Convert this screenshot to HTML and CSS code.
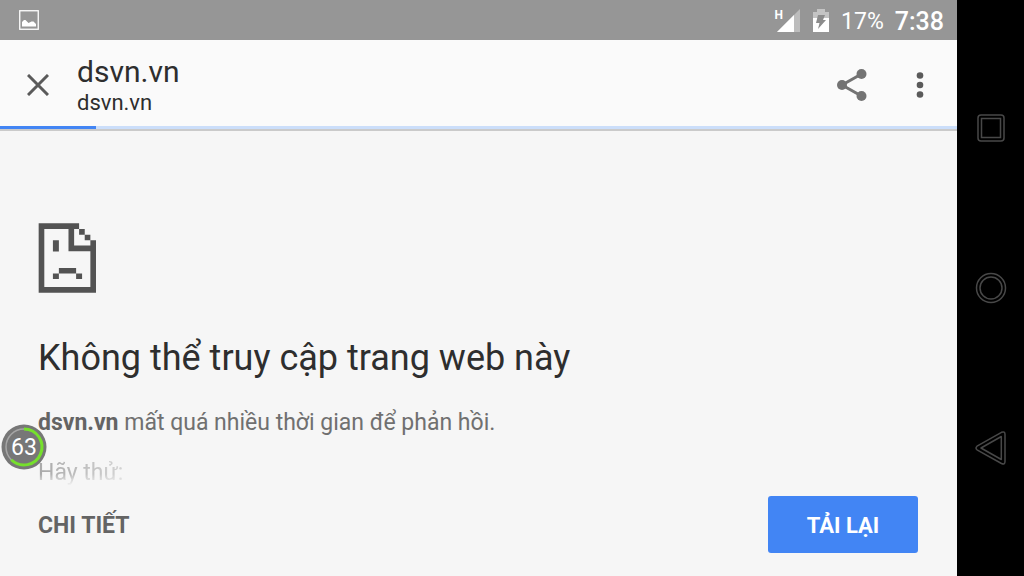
FILE: index.html
```html
<!DOCTYPE html>
<html lang="vi">
<head>
<meta charset="utf-8">
<meta name="viewport" content="width=device-width, initial-scale=1">
<title>dsvn.vn</title>
<link rel="stylesheet" href="styles.css">
</head>
<body>
<div class="screen">
  <div class="app">
    <div class="status">
      <svg class="status-picture" width="20" height="20" viewBox="0 0 20 20"><rect x=".75" y=".75" width="18.5" height="18.5" fill="none" stroke="#fff" stroke-width="1.300"/><path d="M3 16.500v-4.500l2-2 1.500 0 3 3 3-1.500 2 0 2.500 2.500v2.500z" fill="#fff"/></svg>
      <div class="status-right">
        <span class="network">H</span>
        <svg class="signal" width="23" height="23" viewBox="0 0 23 23"><path d="M0 23 23 0V23z" fill="#bdbdbd"/><path d="M0 23 17 6V23z" fill="#fff"/></svg>
        <svg class="battery" width="16" height="23" viewBox="0 0 16 23"><path d="M0 9V3h4V0h8v3h4v6z" fill="#c4c4c4"/><path d="M0 9h16v14H0z" fill="#fff"/><path d="M5 6h7l-2 5h3L5 20l1.500-6H3z" fill="#8c8c8c"/></svg>
        <span class="percent">17%</span>
        <time class="clock">7:38</time>
      </div>
    </div>
    <header class="toolbar">
      <button class="icon-button close" type="button" aria-label="Đóng"><svg width="22" height="22" viewBox="0 0 22 22"><path d="M1 1 21 21M21 1 1 21" stroke="#5a5a5a" stroke-width="3"/></svg></button>
      <div class="site">
        <div class="site-title">dsvn.vn</div>
        <div class="site-host">dsvn.vn</div>
      </div>
      <button class="icon-button share" type="button" aria-label="Chia sẻ"><svg width="30" height="32" viewBox="0 0 30 32"><path d="M24.500 5 5 16 24.500 27" fill="none" stroke="#737373" stroke-width="3"/><g fill="#737373"><circle cx="24.500" cy="5" r="5"/><circle cx="5" cy="16" r="5"/><circle cx="24.500" cy="27" r="5"/></g></svg></button>
      <button class="icon-button menu" type="button" aria-label="Tùy chọn khác"><svg width="8" height="28" viewBox="0 0 8 28" fill="#5a5a5a"><circle cx="4" cy="4.500" r="3.300"/><circle cx="4" cy="14" r="3.300"/><circle cx="4" cy="23.500" r="3.300"/></svg></button>
    </header>
    <div class="progress"><div class="progress-bar" style="width:10%"></div></div>
    <main class="content">
      <svg class="sad-page" width="58" height="70" viewBox="53 39 175 209" fill="#535353"><path d="M55 39H177V56H72V231H211V123H145V39H162V106H211V90H228V248H55zM177 56h17v17h17v17h-17V73h-17zM98 90h18v34H98zM116 174h52v16h18v17h-18v-17h-52v17H98v-17h18z"/></svg>
      <h1 class="heading">Không thể truy cập trang web này</h1>
      <p class="message"><strong>dsvn.vn</strong> mất quá nhiều thời gian để phản hồi.</p>
      <p class="message suggestion">Hãy thử:</p>
    </main>
    <footer class="actions">
      <button class="details" type="button">CHI TIẾT</button>
      <button class="reload" type="button">TẢI LẠI</button>
    </footer>
    <div class="bubble">
      <svg class="bubble-ring" width="46" height="46" viewBox="0 0 46 46" fill="none"><circle cx="23" cy="23" r="22.500" fill="#777"/><circle cx="23" cy="23" r="18" stroke="#a6a6a6" stroke-width="1.500"/><path d="M23 5A18 18 0 1 1 10.300 35.800" stroke="#76e02c" stroke-width="3"/></svg>
      <span class="bubble-value">63</span>
    </div>
  </div>
  <nav class="system">
    <button class="system-button" type="button" aria-label="Gần đây"><svg width="32" height="32" viewBox="0 0 32 32" fill="none" stroke="#484848" stroke-width="1.500"><rect x="3" y="3" width="26" height="26" rx="3"/><rect x="6.500" y="6.500" width="19" height="19"/></svg></button>
    <button class="system-button" type="button" aria-label="Màn hình chính"><svg width="32" height="32" viewBox="0 0 32 32" fill="none" stroke="#484848" stroke-width="1.500"><circle cx="16" cy="16" r="14.500"/><circle cx="16" cy="16" r="11"/></svg></button>
    <button class="system-button" type="button" aria-label="Quay lại"><svg width="32" height="34" viewBox="0 0 32 34" fill="none" stroke="#484848" stroke-width="1.500" stroke-linejoin="round"><path d="M2 15.200 26.500 1.300Q30 0 30 3.500V30.500Q30 34 26.500 32.500L2 18.800Q0 17 2 15.200z"/><path d="M6 17 26.300 5.500V28.500z"/></svg></button>
  </nav>
</div>
</body>
</html>
```
FILE: styles.css
```css
* { box-sizing: border-box; }
body {
  margin: 0;
  font-family: Roboto, "Noto Sans", sans-serif;
  background: #f6f6f6;
  color: #2e2e2e;
}
button {
  border: 0;
  padding: 0;
  background: none;
  font: inherit;
  color: inherit;
}
svg { display: block; }
.screen { display: flex; min-height: 100vh; }
.app {
  position: relative;
  flex: 1;
  min-width: 0;
  display: flex;
  flex-direction: column;
}
.status {
  display: flex;
  align-items: center;
  justify-content: space-between;
  height: 40px;
  padding: 0 13px 0 19px;
  background: #969696;
  color: #fff;
}
.status-right { display: flex; align-items: center; }
.network {
  align-self: flex-start;
  margin-right: -6px;
  padding-top: 8px;
  font-size: 12px;
  line-height: 14px;
  font-weight: 700;
}
.battery { margin: 0 12px 0 13px; }
.percent { font-size: 23px; line-height: 36px; padding-top: 4px; margin-right: 11px; }
.clock { font-size: 25px; line-height: 36px; padding-top: 4px; font-weight: 500; }
.toolbar {
  display: flex;
  align-items: center;
  height: 86px;
  padding: 4px 15px 0 16px;
  background: #fafafa;
}
.icon-button {
  display: grid;
  place-items: center;
  width: 44px;
  height: 44px;
}
.share { margin-right: 24px; }
.site { flex: 1; padding: 1px 0 0 17px; }
.site-title { font-size: 30px; line-height: 34px; }
.site-host { font-size: 22px; line-height: 28px; }
.progress {
  height: 5px;
  background: #cbdefa;
  border-bottom: 2px solid #cacaca;
}
.progress-bar { height: 3px; background: #4285f4; }
.content { flex: 1; padding: 92px 38px 0; }
.heading {
  margin: 41px 0 0;
  font-size: 36px;
  line-height: 48px;
  font-weight: 400;
}
.message {
  margin: 24px 0 0;
  font-size: 23px;
  line-height: 34px;
  color: #707070;
}
.message strong { color: #646464; }
.suggestion {
  margin-top: 16px;
  height: 24px;
  color: #777;
  mask-image: linear-gradient(to right, rgb(0 0 0 / 60%), rgb(0 0 0 / 25%) 90px);
  mask-clip: no-clip;
}
.actions {
  position: relative;
  display: flex;
  align-items: center;
  justify-content: space-between;
  padding: 10px 39px 23px 38px;
  background: #f6f6f6;
}
.actions::before {
  content: "";
  position: absolute;
  inset: auto 0 100%;
  height: 12px;
  background: linear-gradient(to bottom, #f6f6f600, #f6f6f6);
}
.suggestion { height: 34px; margin-bottom: -10px; }
.details {
  padding-top: 2px;
  font-size: 23px;
  line-height: 30px;
  font-weight: 700;
  color: #646464;
}
.reload {
  width: 150px;
  height: 57px;
  padding-top: 2px;
  border-radius: 3px;
  background: #4285f4;
  color: #fff;
  font-size: 22px;
  font-weight: 700;
}
.bubble {
  position: absolute;
  left: 1px;
  bottom: 106px;
  display: grid;
  place-items: center;
}
.bubble > * { grid-area: 1 / 1; }
.bubble-value { color: #fff; font-size: 23px; line-height: 44px; padding-top: 2px; }
.system {
  display: flex;
  flex-direction: column;
  justify-content: space-around;
  align-items: center;
  width: 67px;
  padding: 48px 0;
  background: #000;
}
.system-button { display: grid; place-items: center; width: 48px; height: 48px; }
```
